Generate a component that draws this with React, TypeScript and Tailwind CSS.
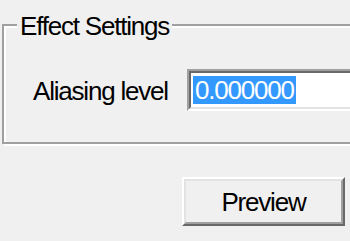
const font = { fontFamily: '"Liberation Sans", Arial, sans-serif' };

const GroupBox = ({ title, children }: { title: string; children: React.ReactNode }) => (
  <div className="relative ml-[2px] mt-[24px] h-[120px] w-[400px] border-2 border-[#a0a0a0] shadow-[inset_2px_2px_0_#ffffff,2px_2px_0_#ffffff]">
    <span className="absolute left-[13px] top-[-13px] bg-[#f0f0f0] px-[3px] text-[26px] leading-[26px] tracking-[-1.2px] text-black">
      {title}
    </span>
    {children}
  </div>
);

const EditBox = ({ value }: { value: string }) => (
  <div className="h-[42px] w-[220px] border-2 border-t-[#a0a0a0] border-l-[#a0a0a0] border-b-white border-r-white">
    <div className="flex h-full items-center border-2 border-t-[#696969] border-l-[#696969] border-b-[#e3e3e3] border-r-[#e3e3e3] bg-white pl-[2px]">
      <span className="bg-[#3399ff] px-[2px] text-[26px] leading-[28px] tracking-[-1.2px] text-white">
        {value}
      </span>
    </div>
  </div>
);

export default function App() {
  return (
    <div className="h-[241px] w-[350px] overflow-hidden bg-[#f0f0f0] text-black" style={font}>
      <GroupBox title="Effect Settings">
        <div className="flex items-start pl-[29px] pt-[43px]">
          <span className="mt-[9px] w-[154px] shrink-0 text-[26px] leading-[26px] tracking-[-1.2px]">
            Aliasing level
          </span>
          <EditBox value="0.000000" />
        </div>
      </GroupBox>

      <button className="ml-[182px] mt-[33px] block h-[49px] w-[163px] border-2 border-t-white border-l-white border-b-[#696969] border-r-[#696969]">
        <div className="flex h-full items-center justify-center border-2 border-t-[#e3e3e3] border-l-[#e3e3e3] border-b-[#a0a0a0] border-r-[#a0a0a0] bg-[#f0f0f0]">
          <span className="text-[26px] leading-[26px] tracking-[-1.2px]">Preview</span>
        </div>
      </button>
    </div>
  );
}
